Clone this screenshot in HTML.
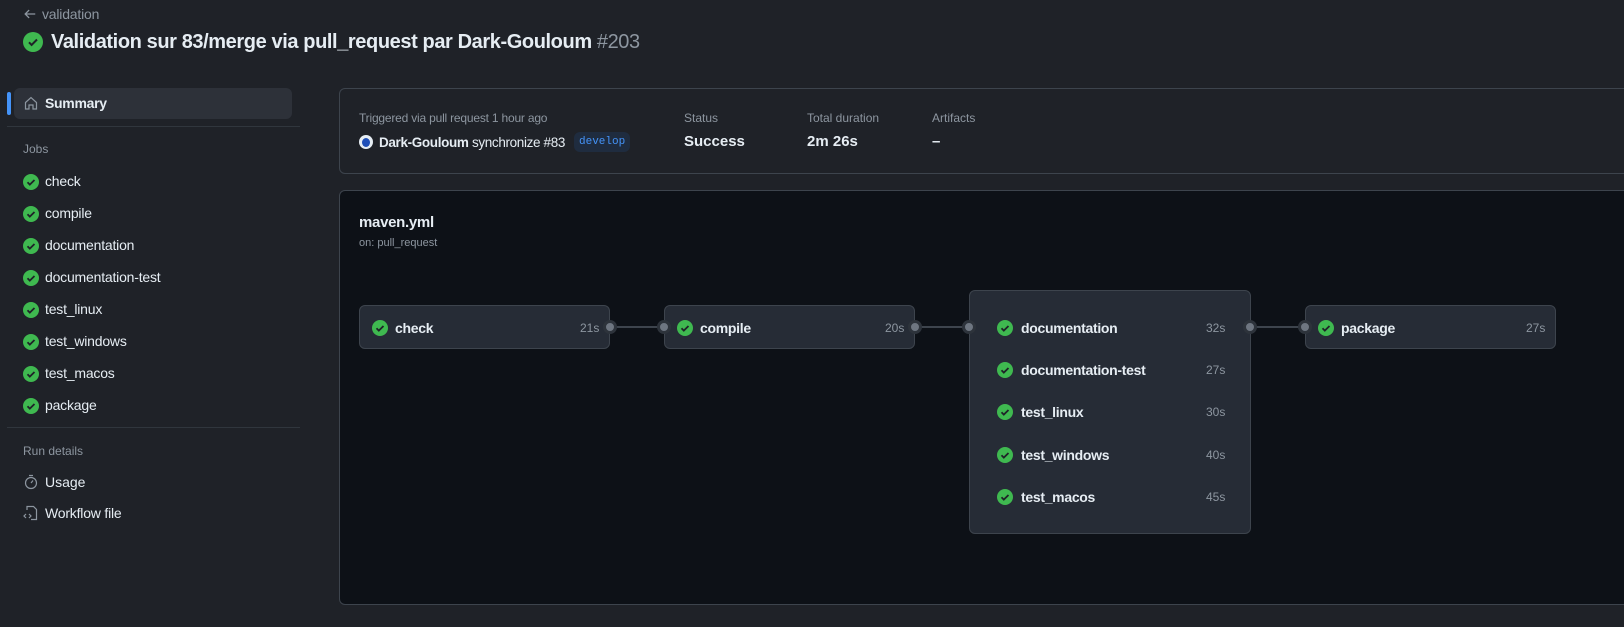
<!DOCTYPE html><html><head><style>
body{margin:0;width:1624px;height:627px;background:#1f2228;font-family:"Liberation Sans",sans-serif;color:#e6edf3;position:relative;overflow:hidden}
.a{position:absolute}
.ck{position:absolute;width:16px;height:16px;border-radius:50%;background:#3fb950}
.ck svg{position:absolute;left:0;top:0}
.item{position:absolute;left:23px;font-size:14px;color:#e6edf3;letter-spacing:-0.2px}
.item .ck{left:0;top:1px}
.item span{position:absolute;left:22px;top:0;white-space:nowrap}
.muted{color:#8d96a0}
.node{position:absolute;background:#262c36;border:1px solid #3d444d;border-radius:6px;box-sizing:border-box}
.nl{position:absolute;font-size:14px;font-weight:bold;color:#e6edf3;white-space:nowrap;letter-spacing:-0.3px}
.dur{position:absolute;font-size:12px;color:#8d96a0}
.dot{position:absolute;width:8px;height:8px;border-radius:50%;background:#6e7681;border:3px solid #2d333b}
.line{position:absolute;height:2px;background:#3d444d}
</style></head><body>
<svg class="a" style="left:23px;top:7px" width="14" height="14" viewBox="0 0 16 16"><path d="M14 8H3M7 3.5L2.5 8 7 12.5" stroke="#8d96a0" stroke-width="1.5" fill="none"/></svg>
<div class="a muted" style="left:42px;top:6px;font-size:14px;letter-spacing:-0.2px">validation</div>
<div class="ck" style="left:23px;top:32px;width:20px;height:20px"><svg width="20" height="20" viewBox="0 0 20 20"><path d="M6 10.3l2.6 2.6L14 7.5" stroke="#1f2228" stroke-width="2" fill="none"/></svg></div>
<div class="a" style="left:51px;top:31px;font-size:20px;font-weight:bold;white-space:nowrap;letter-spacing:-0.4px">Validation sur 83/merge via pull_request par Dark-Gouloum <span style="font-weight:normal;color:#8d96a0">#203</span></div>

<div class="a" style="left:7px;top:92px;width:4px;height:23px;background:#4493f8;border-radius:2px"></div>
<div class="a" style="left:14px;top:88px;width:278px;height:31px;background:#2d3139;border-radius:6px"></div>
<svg class="a" style="left:23px;top:95px" width="16" height="16" viewBox="0 0 16 16"><path d="M2.5 7.5L8 2.5l5.5 5V14H10V10H6v4H2.5z" stroke="#8d96a0" stroke-width="1.2" fill="none"/></svg>
<div class="a" style="left:45px;top:95px;font-size:14px;font-weight:bold;letter-spacing:-0.3px">Summary</div>
<div class="a" style="left:7px;top:126px;width:293px;height:1px;background:#30363d"></div>
<div class="a muted" style="left:23px;top:142px;font-size:12px">Jobs</div>
<div class="item" style="top:173px"><div class="ck"><svg width="16" height="16"><path d="M4.5 8.3l2.3 2.3L11.5 6" stroke="#1f2228" stroke-width="1.8" fill="none"/></svg></div><span>check</span></div>
<div class="item" style="top:205px"><div class="ck"><svg width="16" height="16"><path d="M4.5 8.3l2.3 2.3L11.5 6" stroke="#1f2228" stroke-width="1.8" fill="none"/></svg></div><span>compile</span></div>
<div class="item" style="top:237px"><div class="ck"><svg width="16" height="16"><path d="M4.5 8.3l2.3 2.3L11.5 6" stroke="#1f2228" stroke-width="1.8" fill="none"/></svg></div><span>documentation</span></div>
<div class="item" style="top:269px"><div class="ck"><svg width="16" height="16"><path d="M4.5 8.3l2.3 2.3L11.5 6" stroke="#1f2228" stroke-width="1.8" fill="none"/></svg></div><span>documentation-test</span></div>
<div class="item" style="top:301px"><div class="ck"><svg width="16" height="16"><path d="M4.5 8.3l2.3 2.3L11.5 6" stroke="#1f2228" stroke-width="1.8" fill="none"/></svg></div><span>test_linux</span></div>
<div class="item" style="top:333px"><div class="ck"><svg width="16" height="16"><path d="M4.5 8.3l2.3 2.3L11.5 6" stroke="#1f2228" stroke-width="1.8" fill="none"/></svg></div><span>test_windows</span></div>
<div class="item" style="top:365px"><div class="ck"><svg width="16" height="16"><path d="M4.5 8.3l2.3 2.3L11.5 6" stroke="#1f2228" stroke-width="1.8" fill="none"/></svg></div><span>test_macos</span></div>
<div class="item" style="top:397px"><div class="ck"><svg width="16" height="16"><path d="M4.5 8.3l2.3 2.3L11.5 6" stroke="#1f2228" stroke-width="1.8" fill="none"/></svg></div><span>package</span></div>
<div class="a" style="left:7px;top:427px;width:293px;height:1px;background:#30363d"></div>
<div class="a muted" style="left:23px;top:444px;font-size:12px">Run details</div>
<svg class="a" style="left:23px;top:474px" width="16" height="16" viewBox="0 0 16 16"><circle cx="8" cy="9" r="5.5" stroke="#8d96a0" stroke-width="1.2" fill="none"/><path d="M6 1.5h4M8 9l2-2.5" stroke="#8d96a0" stroke-width="1.2"/></svg>
<div class="a" style="left:45px;top:474px;font-size:14px">Usage</div>
<svg class="a" style="left:23px;top:505px" width="16" height="16" viewBox="0 0 16 16"><path d="M4 5V1.5h6.5L13.5 4.5V14.5H8" stroke="#8d96a0" stroke-width="1.2" fill="none"/><path d="M3 9L1 11l2 2M6 9l2 2-2 2" stroke="#8d96a0" stroke-width="1.2" fill="none"/></svg>
<div class="a" style="left:45px;top:505px;font-size:14px;letter-spacing:-0.2px">Workflow file</div>

<div class="a" style="left:339px;top:88px;width:1300px;height:86px;border:1px solid #3d444d;border-radius:6px;box-sizing:border-box"></div>
<div class="a muted" style="left:359px;top:111px;font-size:12px;letter-spacing:-0.2px">Triggered via pull request 1 hour ago</div>
<div class="a" style="left:359px;top:135px;width:14px;height:14px;border-radius:50%;background:#e6edf3"><div class="a" style="left:3px;top:3px;width:8px;height:9px;border-radius:50%;background:#1f4fb8"></div></div>
<div class="a" style="left:379px;top:135px;font-size:13.5px;white-space:nowrap;letter-spacing:-0.35px"><b>Dark-Gouloum</b> synchronize #83</div>
<div class="a" style="left:574px;top:132px;height:20px;padding:0 5px;background:#1f2c3f;border-radius:6px;color:#4493f8;font:11px/20px 'Liberation Mono',monospace">develop</div>
<div class="a muted" style="left:684px;top:111px;font-size:12px">Status</div>
<div class="a" style="left:684px;top:133px;font-size:15px;font-weight:bold">Success</div>
<div class="a muted" style="left:807px;top:111px;font-size:12px">Total duration</div>
<div class="a" style="left:807px;top:133px;font-size:15px;font-weight:bold">2m 26s</div>
<div class="a muted" style="left:932px;top:111px;font-size:12px">Artifacts</div>
<div class="a" style="left:932px;top:133px;font-size:15px;font-weight:bold">–</div>

<div class="a" style="left:339px;top:190px;width:1300px;height:415px;background:#0d1117;border:1px solid #3d444d;border-radius:6px;box-sizing:border-box"></div>
<div class="a" style="left:359px;top:214px;font-size:15px;font-weight:bold;letter-spacing:-0.3px">maven.yml</div>
<div class="a muted" style="left:359px;top:237px;font-size:11px">on: pull_request</div>

<div class="line" style="left:610px;top:326px;width:55px"></div>
<div class="line" style="left:915px;top:326px;width:55px"></div>
<div class="line" style="left:1250px;top:326px;width:56px"></div>

<div class="node" style="left:359px;top:305px;width:251px;height:44px"></div>
<div class="node" style="left:664px;top:305px;width:251px;height:44px"></div>
<div class="node" style="left:969px;top:290px;width:282px;height:244px"></div>
<div class="node" style="left:1305px;top:305px;width:251px;height:44px"></div>

<div class="dot" style="left:603px;top:320px"></div>
<div class="dot" style="left:657px;top:320px"></div>
<div class="dot" style="left:908px;top:320px"></div>
<div class="dot" style="left:962px;top:320px"></div>
<div class="dot" style="left:1243px;top:320px"></div>
<div class="dot" style="left:1298px;top:320px"></div>

<div class="ck" style="left:372px;top:320px"><svg width="16" height="16"><path d="M4.5 8.3l2.3 2.3L11.5 6" stroke="#1f2228" stroke-width="1.8" fill="none"/></svg></div><div class="nl" style="left:395px;top:320px">check</div><div class="dur" style="left:580px;top:321px">21s</div>
<div class="ck" style="left:677px;top:320px"><svg width="16" height="16"><path d="M4.5 8.3l2.3 2.3L11.5 6" stroke="#1f2228" stroke-width="1.8" fill="none"/></svg></div><div class="nl" style="left:700px;top:320px">compile</div><div class="dur" style="left:885px;top:321px">20s</div>
<div class="ck" style="left:997px;top:320px"><svg width="16" height="16"><path d="M4.5 8.3l2.3 2.3L11.5 6" stroke="#1f2228" stroke-width="1.8" fill="none"/></svg></div><div class="nl" style="left:1021px;top:320px">documentation</div><div class="dur" style="left:1206px;top:321px">32s</div>
<div class="ck" style="left:997px;top:362px"><svg width="16" height="16"><path d="M4.5 8.3l2.3 2.3L11.5 6" stroke="#1f2228" stroke-width="1.8" fill="none"/></svg></div><div class="nl" style="left:1021px;top:362px">documentation-test</div><div class="dur" style="left:1206px;top:363px">27s</div>
<div class="ck" style="left:997px;top:404px"><svg width="16" height="16"><path d="M4.5 8.3l2.3 2.3L11.5 6" stroke="#1f2228" stroke-width="1.8" fill="none"/></svg></div><div class="nl" style="left:1021px;top:404px">test_linux</div><div class="dur" style="left:1206px;top:405px">30s</div>
<div class="ck" style="left:997px;top:447px"><svg width="16" height="16"><path d="M4.5 8.3l2.3 2.3L11.5 6" stroke="#1f2228" stroke-width="1.8" fill="none"/></svg></div><div class="nl" style="left:1021px;top:447px">test_windows</div><div class="dur" style="left:1206px;top:448px">40s</div>
<div class="ck" style="left:997px;top:489px"><svg width="16" height="16"><path d="M4.5 8.3l2.3 2.3L11.5 6" stroke="#1f2228" stroke-width="1.8" fill="none"/></svg></div><div class="nl" style="left:1021px;top:489px">test_macos</div><div class="dur" style="left:1206px;top:490px">45s</div>
<div class="ck" style="left:1318px;top:320px"><svg width="16" height="16"><path d="M4.5 8.3l2.3 2.3L11.5 6" stroke="#1f2228" stroke-width="1.8" fill="none"/></svg></div><div class="nl" style="left:1341px;top:320px">package</div><div class="dur" style="left:1526px;top:321px">27s</div>
</body></html>
